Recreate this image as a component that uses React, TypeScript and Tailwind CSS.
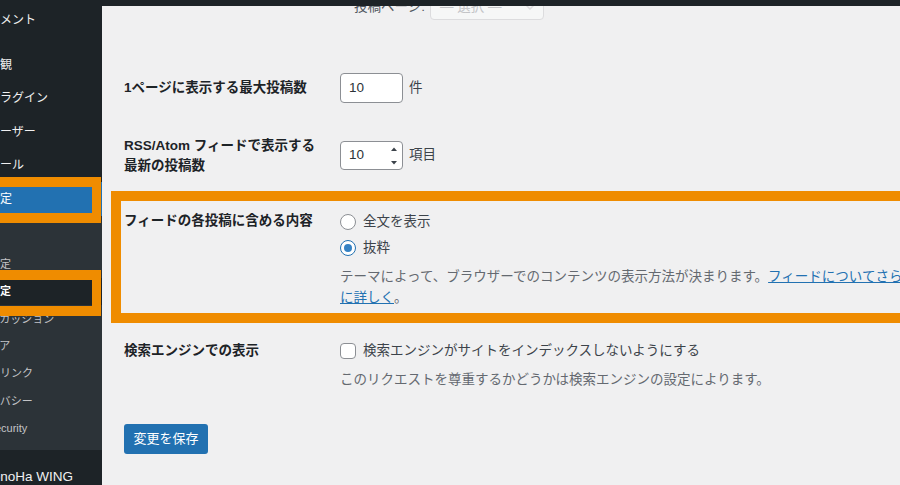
import React from 'react';

const FONT = "font-['Liberation_Sans','Noto_Sans_CJK_JP',sans-serif]";

function MenuItem({ label, className = '' }: { label: string; className?: string }) {
    return (
        <div className={`flex h-[33.5px] flex-none items-center text-[12px] text-[#f0f0f1] whitespace-nowrap ${className}`}>
            <span className="ml-[-12px]">{label}</span>
        </div>
    );
}

function SubItem({ label, current = false }: { label: string; current?: boolean }) {
    return (
        <div
            className={`flex h-[27.4px] flex-none items-center whitespace-nowrap text-[11px] ${
                current ? 'bg-[#1d2327] font-semibold text-white' : 'text-[#c3c4c7]'
            }`}
        >
            <span className="ml-[-33px]">{label}</span>
        </div>
    );
}

function Sidebar() {
    return (
        <aside className="relative flex w-[102px] flex-none flex-col bg-[#1d2327] pt-[3px]">
            <MenuItem label="コメント" className="h-[34px]" />
            <div className="h-[11px] flex-none" />
            <MenuItem label="外観" />
            <MenuItem label="プラグイン" />
            <MenuItem label="ユーザー" />
            <MenuItem label="ツール" />
            <div className="flex h-[34px] flex-none items-center bg-[#2271b1] text-[12px] text-white whitespace-nowrap">
                <span className="ml-[-12px]">設定</span>
            </div>
            <div className="flex flex-none flex-col bg-[#2c3338] pb-[8px] pt-[7px]">
                <SubItem label="一般" />
                <SubItem label="投稿設定" />
                <SubItem label="表示設定" current />
                <SubItem label="ディスカッション" />
                <SubItem label="メディア" />
                <SubItem label="パーマリンク" />
                <SubItem label="プライバシー" />
                <SubItem label="WP Security" />
            </div>
            <div className="mt-[10px] flex h-[34px] flex-none items-center text-[13.5px] text-[#f0f0f1] whitespace-nowrap">
                <span className="ml-[-17px]">ConoHa WING</span>
            </div>

            {/* annotation frames */}
            <div className="pointer-events-none absolute left-0 top-[177px] h-[46px] w-[101px] border-y-[10px] border-r-[9px] border-[#ef8c00]" />
            <div className="pointer-events-none absolute left-0 top-[270px] h-[46px] w-[101px] border-y-[10px] border-r-[9px] border-[#ef8c00]" />
        </aside>
    );
}

function Spinner() {
    return (
        <svg width="8" height="22" viewBox="0 0 8 22" className="flex-none">
            <path d="M1 6 L4 2.5 L7 6 Z" fill="#3c434a" />
            <path d="M1 16 L4 19.5 L7 16 Z" fill="#3c434a" />
        </svg>
    );
}

function Radio({ checked = false }: { checked?: boolean }) {
    return (
        <span
            className={`flex h-4 w-4 flex-none items-center justify-center rounded-full border bg-white ${
                checked ? 'border-[#2271b1]' : 'border-[#8c8f94]'
            }`}
        >
            {checked && <span className="h-2 w-2 rounded-full bg-[#3582c4]" />}
        </span>
    );
}

export default function App() {
    return (
        <div className={`relative flex h-[485px] w-[900px] overflow-hidden bg-[#f0f0f1] ${FONT}`}>
            <Sidebar />

            <main className="relative flex min-w-0 flex-1 flex-col text-[13.5px] text-[#3c434a]">
                {/* admin bar, lies over the page top */}
                <div className="absolute left-0 right-0 top-0 z-10 h-[6px] bg-[#1d2327]" />

                {/* 投稿ページ select (scrolled under the bar) */}
                <div className="mt-[-9px] flex h-[29px] flex-none items-center pl-[252px]">
                    <span className="mt-[4px] text-[#50575e]">投稿ページ:</span>
                    <div className="ml-[5px] flex h-[29px] w-[114px] items-center justify-between rounded-[4px] border border-[#dcdcde] bg-[#f6f7f7] pl-[9px] pr-[8px] text-[#c3c4c7]">
                        <span className="mt-[4px]">— 選択 —</span>
                        <svg width="10" height="6" viewBox="0 0 10 6" className="mt-[2px]">
                            <path d="M1 1 L5 5 L9 1" fill="none" stroke="#dcdcde" strokeWidth="1.5" />
                        </svg>
                    </div>
                </div>

                {/* 最大投稿数 */}
                <div className="mt-[53px] flex h-[30px] flex-none items-center pl-[22px]">
                    <div className="w-[216px] font-semibold text-[#1d2327]">1ページに表示する最大投稿数</div>
                    <div className="flex h-[30px] w-[63px] items-center rounded-[4px] border border-[#8c8f94] bg-white pl-[8px] text-[#2c3338]">
                        10
                    </div>
                    <span className="ml-[6px]">件</span>
                </div>

                {/* RSS */}
                <div className="mt-[33px] flex flex-none items-start pl-[22px]">
                    <div className="w-[216px] font-semibold leading-[20px] text-[#1d2327]">
                        RSS/Atom フィードで表示する
                        <br />
                        最新の投稿数
                    </div>
                    <div className="mt-[5px] flex items-center">
                        <div className="flex h-[29px] w-[63px] items-center justify-between rounded-[4px] border border-[#8c8f94] bg-white pl-[8px] pr-[4px] text-[#2c3338]">
                            <span>10</span>
                            <Spinner />
                        </div>
                        <span className="ml-[6px]">項目</span>
                    </div>
                </div>

                {/* highlighted row */}
                <div className="ml-[9px] mt-[15px] flex flex-none border-y-[10px] border-l-[10px] border-[#ef8c00] pb-[5px]">
                    <div className="w-[219px] flex-none pl-[3px] pt-[10px] font-semibold leading-[20px] text-[#1d2327]">
                        フィードの各投稿に含める内容
                    </div>
                    <div className="flex flex-col pt-[11px]">
                        <label className="flex h-[20px] items-center gap-[7px]">
                            <Radio />
                            <span>全文を表示</span>
                        </label>
                        <label className="mt-[6px] flex h-[20px] items-center gap-[7px]">
                            <Radio checked />
                            <span>抜粋</span>
                        </label>
                        <p className="mt-[8px] w-[568px] leading-[21px] text-[#646970]">
                            テーマによって、ブラウザーでのコンテンツの表示方法が決まります。
                            <a className="text-[#2271b1] underline">フィードについてさらに詳しく</a>。
                        </p>
                    </div>
                </div>

                {/* 検索エンジン */}
                <div className="mt-[18px] flex flex-none items-start pl-[22px]">
                    <div className="w-[216px] flex-none font-semibold leading-[20px] text-[#1d2327]">検索エンジンでの表示</div>
                    <div className="flex flex-col">
                        <label className="flex h-[20px] items-center gap-[7px]">
                            <span className="h-4 w-4 flex-none rounded-[4px] border border-[#8c8f94] bg-white" />
                            <span>検索エンジンがサイトをインデックスしないようにする</span>
                        </label>
                        <p className="mt-[8px] leading-[21px] text-[#646970]">
                            このリクエストを尊重するかどうかは検索エンジンの設定によります。
                        </p>
                    </div>
                </div>

                <div className="mt-[34px] flex-none pl-[22px]">
                    <button className="h-[30px] w-[84px] rounded-[3px] bg-[#2271b1] text-[13px] text-white">
                        変更を保存
                    </button>
                </div>
            </main>
        </div>
    );
}
